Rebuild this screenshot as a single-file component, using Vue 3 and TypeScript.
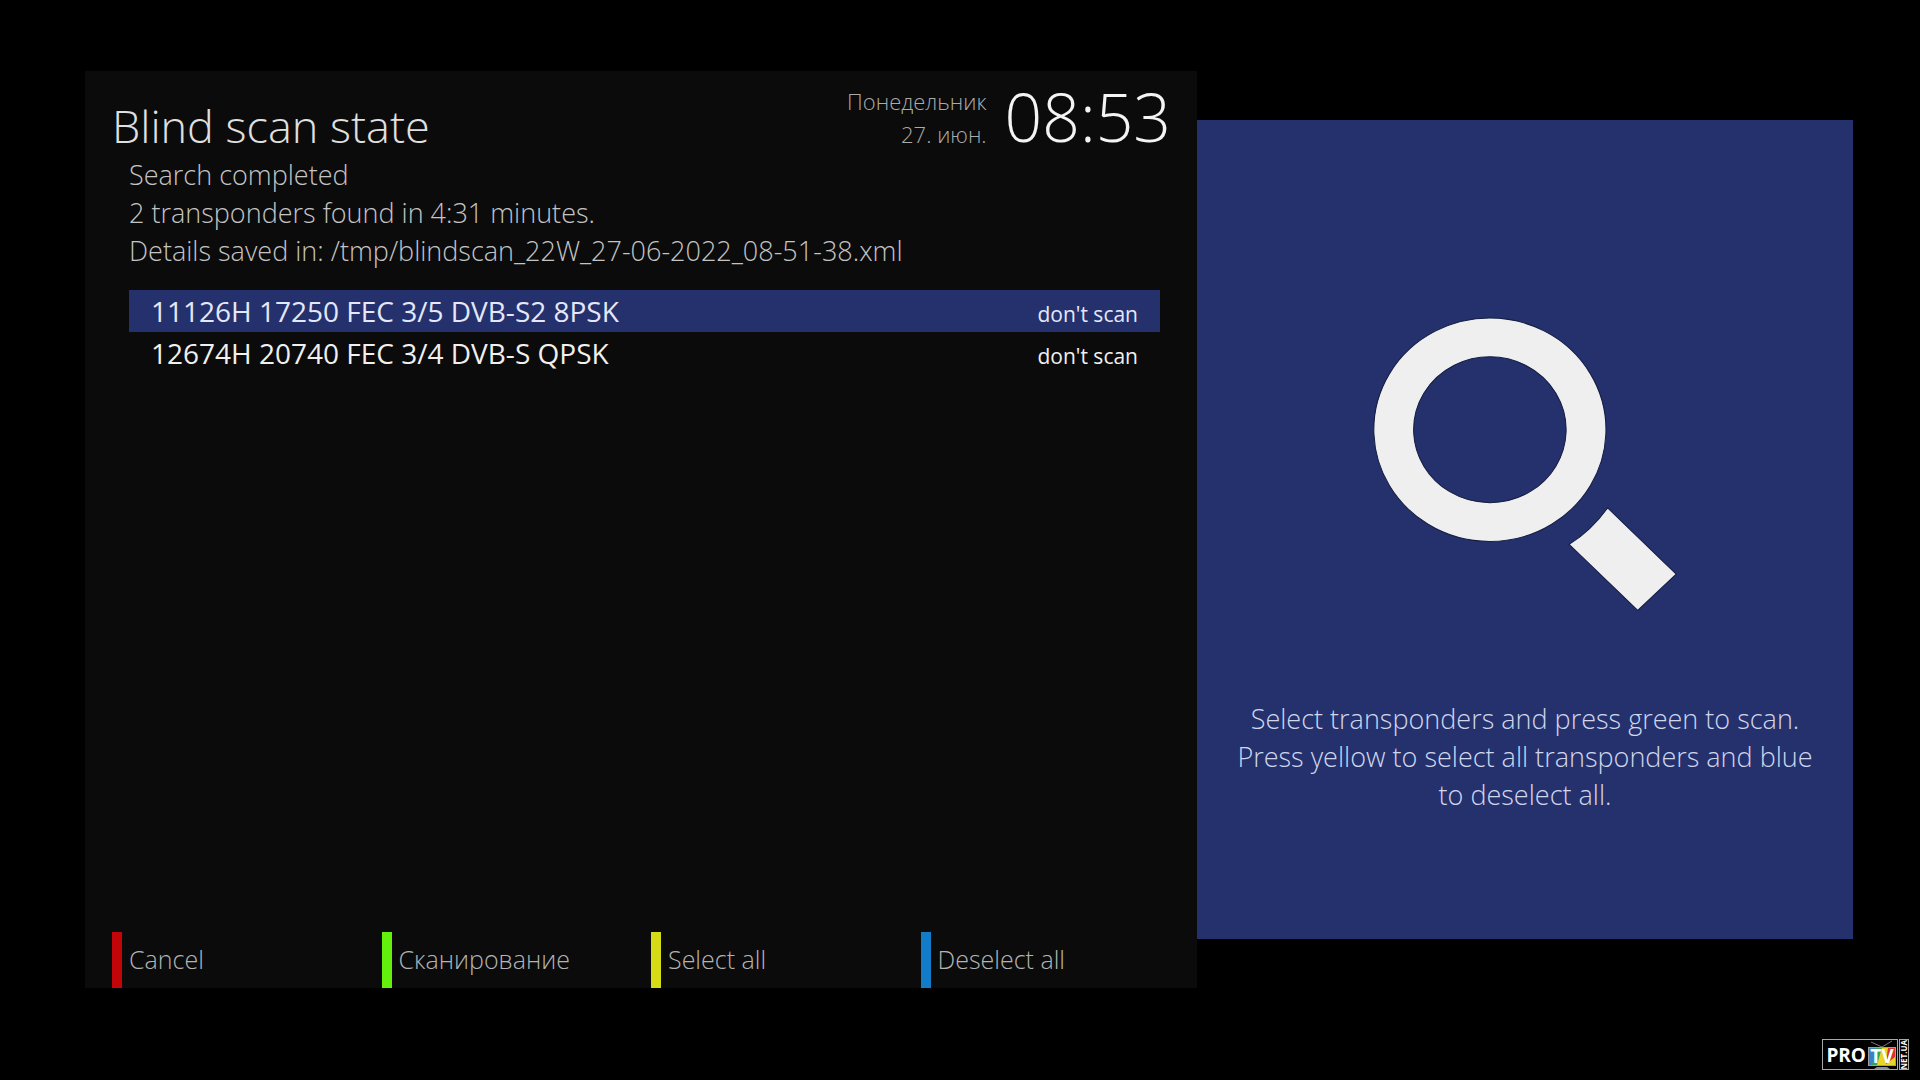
<script setup lang="ts">
interface Transponder {
  name: string
  state: string
}

interface ColorKey {
  label: string
  color: string
}

const messages: string[] = [
  'Search completed',
  '2 transponders found in 4:31 minutes.',
  'Details saved in: /tmp/blindscan_22W_27-06-2022_08-51-38.xml',
]

const transponders: Transponder[] = [
  { name: '11126H 17250 FEC 3/5 DVB-S2 8PSK', state: "don't scan" },
  { name: '12674H 20740 FEC 3/4 DVB-S QPSK', state: "don't scan" },
]

const keys: ColorKey[] = [
  { label: 'Cancel', color: 'red' },
  { label: 'Сканирование', color: 'green' },
  { label: 'Select all', color: 'yellow' },
  { label: 'Deselect all', color: 'blue' },
]
</script>

<template>
  <div class="screen">
    <main class="panel">
      <header class="header">
        <h1 class="title">Blind scan state</h1>
        <div class="now">
          <div class="date">
            <div>Понедельник</div>
            <div>27. июн.</div>
          </div>
          <time class="clock">08:53</time>
        </div>
      </header>

      <div class="status">
        <p v-for="line in messages" :key="line">{{ line }}</p>
      </div>

      <ul class="list">
        <li v-for="(item, index) in transponders" :key="item.name">
          <button type="button" class="row" :class="{ selected: index === 0 }">
            <span>{{ item.name }}</span>
            <span class="state">{{ item.state }}</span>
          </button>
        </li>
      </ul>

      <footer class="keys">
        <button v-for="key in keys" :key="key.label" type="button" class="key" :class="key.color">
          {{ key.label }}
        </button>
      </footer>
    </main>

    <aside class="help">
      <svg class="lens" viewBox="100 75 920 885" aria-hidden="true">
        <g fill="#efefef" stroke="#141c40" stroke-width="3">
          <path
            fill-rule="evenodd"
            d="M455 84a347 334 0 1 0 .1 0zM455 200a228 218 0 1 1-.1 0z"
          />
          <path d="M807 652L1012 850L897 958L692 761Q758 720 807 652z" />
        </g>
      </svg>
      <p class="hint">
        Select transponders and press green to scan. Press yellow to select all transponders and
        blue to deselect all.
      </p>
    </aside>

    <div class="logo">
      <div class="brand">
        <span>PRO</span>
        <span class="tv">
          <svg class="tv-art" viewBox="0 0 30 30" aria-hidden="true">
            <path d="M4 2L15 7L25 1" fill="none" stroke="#777" />
            <path d="M1 7H29V26H1z" fill="#9aa0a4" />
            <path d="M2 8H9L6 25H2z" fill="#3d7fc0" />
            <path d="M9 8H15L10 25H5z" fill="#35a35a" />
            <path d="M15 8H21L19 25H10z" fill="#e9d523" />
            <path d="M21 8H28V17L19 25z" fill="#d8342c" />
            <path d="M28 17V25H18z" fill="#e9d523" />
            <path d="M10 27H20L23 29H7z" fill="#8a8f94" />
          </svg>
          <span class="tv-text">TV</span>
        </span>
      </div>
      <div class="domain">NET.UA</div>
    </div>
  </div>
</template>

<style>
body {
  margin: 0;
  background: #000;
}
</style>

<style scoped>
.screen {
  box-sizing: border-box;
  display: grid;
  grid-template-columns: 1112fr 656fr;
  min-height: 100vh;
  padding: 71px 67px 92px 85px;
  background: #000;
  color: #c4c4c4;
  font-family: 'Open Sans', 'Noto Sans', sans-serif;
  font-weight: 300;
}

.panel {
  display: flex;
  flex-direction: column;
  background: #0b0b0b;
}

.header {
  display: flex;
  justify-content: space-between;
  align-items: flex-end;
  padding: 5px 26px 0 27px;
}

.title {
  margin: 0;
  color: #e0e0e0;
  font-size: 45px;
  font-weight: 300;
  line-height: 60px;
}

.now {
  display: flex;
  align-items: center;
  gap: 18px;
}

.date {
  padding-top: 4px;
  color: #aaa;
  font-size: 22px;
  line-height: 33px;
  text-align: right;
}

.clock {
  color: #f4f4f4;
  font-size: 66px;
  line-height: 80px;
}

.status {
  padding-left: 44px;
  font-size: 27px;
  line-height: 38px;
}

.status p {
  margin: 0;
}

.list {
  flex: 1;
  margin: 20px 37px 0 44px;
  padding: 0;
  list-style: none;
}

button {
  margin: 0;
  border: 0;
  background: none;
  color: inherit;
  font: inherit;
  text-align: left;
}

.row {
  display: flex;
  justify-content: space-between;
  align-items: baseline;
  width: 100%;
  padding: 0 22px;
  color: #f0f0f0;
  font-size: 28px;
  font-weight: 400;
  line-height: 42px;
}

.row.selected {
  background: #24316d;
  color: #e4e8fa;
}

.state {
  font-size: 21px;
  line-height: 30px;
}

.keys {
  display: grid;
  grid-template-columns: repeat(4, 1fr);
  padding: 0 7px 0 27px;
}

.key {
  padding: 0 0 2px 7px;
  border-left: 10px solid;
  color: #b4b4b4;
  font-size: 25px;
  line-height: 54px;
}

.key.red {
  border-color: #c20508;
}

.key.green {
  border-color: #62f00c;
}

.key.yellow {
  border-color: #d5dc16;
}

.key.blue {
  border-color: #127cc8;
}

.help {
  display: flex;
  flex-direction: column;
  align-items: center;
  margin: 49px 0;
  padding: 195px 34px 0;
  background: #24316d;
}

.lens {
  width: 308px;
  height: 296px;
}

.hint {
  margin: 89px 0 0;
  color: #d0d6ec;
  font-size: 27px;
  line-height: 38px;
  text-align: center;
}

.logo {
  position: absolute;
  right: 11px;
  bottom: 10px;
  display: flex;
  gap: 1px;
  height: 31px;
  color: #fff;
  font-weight: 700;
}

.brand {
  display: flex;
  align-items: center;
  gap: 1px;
  padding-left: 3px;
  border: 1px solid #a8a8a8;
  font-size: 19px;
}

.tv {
  position: relative;
  width: 30px;
  height: 29px;
  line-height: 32px;
  text-align: center;
}

.tv-art {
  position: absolute;
  inset: 0;
}

.tv-text {
  position: relative;
}

.domain {
  border: 1px solid #a8a8a8;
  font-size: 8px;
  line-height: 8px;
  text-align: center;
  writing-mode: sideways-lr;
}
</style>
